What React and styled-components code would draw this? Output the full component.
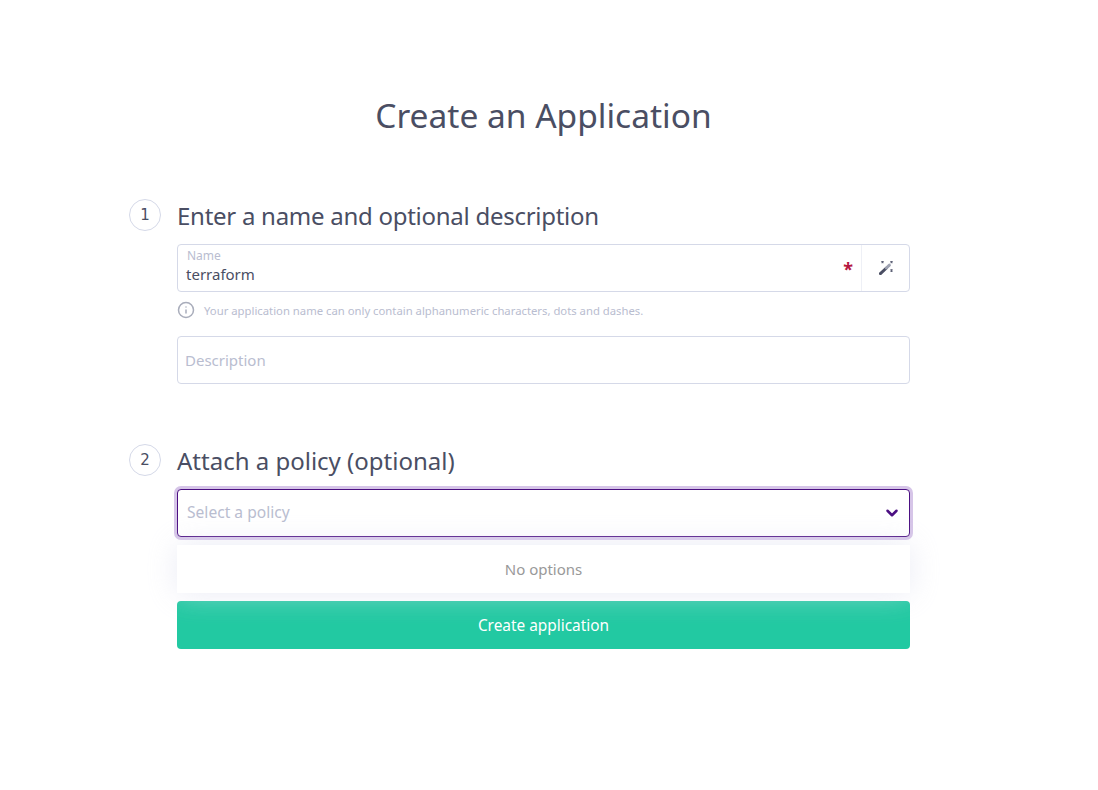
import styled, { createGlobalStyle } from 'styled-components';
import { Info, ChevronDown } from 'lucide-react';

const GlobalStyle = createGlobalStyle`
    html, body {
        margin: 0;
        padding: 0;
        background: #fff;
        font-family: "Noto Sans", "Open Sans", sans-serif;
    }
    * {
        box-sizing: border-box;
    }
`;

const Page = styled.div`
    width: 1098px;
    height: 790px;
    overflow: hidden;
    padding: 92px 0 0 129px;
`;

const Title = styled.h1`
    width: 829px;
    margin: 0 0 61px;
    text-align: center;
    font-size: 33.5px;
    line-height: 46px;
    font-weight: 400;
    color: #4a4e63;
`;

const Step = styled.section`
    display: grid;
    grid-template-columns: 32px 733px;
    column-gap: 16px;
    margin-bottom: ${(props) => props.$gap || 0}px;
`;

const StepNumber = styled.div`
    width: 32px;
    height: 32px;
    border: 1px solid #d5d9e8;
    border-radius: 50%;
    display: flex;
    align-items: center;
    justify-content: center;
    font-family: "DejaVu Sans", sans-serif;
    font-size: 15px;
    color: #4a4e63;
`;

const StepBody = styled.div`
    display: flex;
    flex-direction: column;
    position: relative;
`;

const Heading = styled.h2`
    margin: 0 0 11px;
    font-size: 24px;
    line-height: 34px;
    font-weight: 400;
    letter-spacing: ${(props) => props.$tight ? '-0.27px' : '0'};
    color: #4a4e63;
`;

const Field = styled.div`
    height: 48px;
    border: 1px solid #d5d9e8;
    border-radius: 4px;
    background: #fff;
    display: flex;
    align-items: stretch;
`;

const FieldMain = styled.div`
    flex: 1;
    display: flex;
    flex-direction: column;
    justify-content: center;
    padding: 0 8px ${(props) => props.$stacked ? '5px' : '0'} ${(props) => props.$stacked ? '8px' : '7px'};
    position: relative;
`;

const FloatLabel = styled.label`
    font-size: 12px;
    line-height: 15px;
    padding-left: 1px;
    color: #b9bdd0;
`;

const Value = styled.div`
    margin-top: 1px;
    font-size: 15px;
    line-height: 20px;
    color: #4a4e63;
`;

const Placeholder = styled.div`
    font-size: ${(props) => props.$size || 15}px;
    line-height: 20px;
    margin-top: ${(props) => props.$lift ? '-2px' : '0'};
    color: #b9bdd0;
`;

const Required = styled.span`
    position: absolute;
    right: 8px;
    top: 12px;
    font-size: 18px;
    font-weight: 700;
    line-height: 24px;
    color: #b5173f;
`;

const FieldAction = styled.div`
    width: 48px;
    border-left: 1px solid #eef0f6;
    display: flex;
    align-items: center;
    justify-content: center;
    color: #4a4e63;
`;

const Hint = styled.div`
    display: flex;
    align-items: center;
    gap: 9px;
    height: 18px;
    margin: 9px 0 17px;
    font-size: 11.3px;
    color: #b9bdd0;

    svg {
        color: #a9adbb;
    }
`;

const SelectBox = styled.div`
    height: 48px;
    border: 1px solid #4b0f82;
    border-radius: 4px;
    box-shadow: 0 0 0 3px #d6c5e8;
    background: #fff;
    display: flex;
    align-items: center;
    justify-content: space-between;
    padding: 0 8px 0 9px;
    color: #4b0f82;
`;

const Menu = styled.div`
    position: absolute;
    left: 0;
    right: 0;
    top: 101px;
    height: 48px;
    background: #fff;
    display: flex;
    align-items: center;
    justify-content: center;
    font-size: 15px;
    color: #999;
    box-shadow: 0 0 30px rgba(222, 225, 240, 0.65);
`;

const SubmitButton = styled.button`
    display: block;
    width: 733px;
    height: 48px;
    margin: 64px 0 0 48px;
    border: 0;
    border-radius: 4px;
    background: #22c9a2;
    color: #fff;
    font-family: inherit;
    font-size: 15.4px;
`;

function WandIcon() {
    return (
        <svg width="14" height="14" viewBox="0 0 14 14" fill="none">
            <path d="M1.4 12.6 L7.4 7" stroke="#4a4e63" strokeWidth="3" strokeLinecap="round" />
            <path d="M7.4 7 L10.4 4.2" stroke="#9da1b1" strokeWidth="3" strokeLinecap="round" />
            <path d="M2.5 0 L4.5 2 M4.5 0 L2.5 2 M11.5 0 L13.5 2 M13.5 0 L11.5 2 M11.5 8.5 L13.5 10.5 M13.5 8.5 L11.5 10.5" stroke="#5f6378" strokeWidth="1.2" />
        </svg>
    );
}

export default function App() {
    return (
        <Page>
            <GlobalStyle />
            <Title>Create an Application</Title>

            <Step $gap={60}>
                <StepNumber>1</StepNumber>
                <StepBody>
                    <Heading $tight>Enter a name and optional description</Heading>
                    <Field>
                        <FieldMain $stacked>
                            <FloatLabel>Name</FloatLabel>
                            <Value>terraform</Value>
                            <Required>*</Required>
                        </FieldMain>
                        <FieldAction><WandIcon /></FieldAction>
                    </Field>
                    <Hint>
                        <Info size={18} strokeWidth={2} />
                        Your application name can only contain alphanumeric characters, dots and dashes.
                    </Hint>
                    <Field>
                        <FieldMain>
                            <Placeholder>Description</Placeholder>
                        </FieldMain>
                    </Field>
                </StepBody>
            </Step>

            <Step>
                <StepNumber>2</StepNumber>
                <StepBody>
                    <Heading>Attach a policy (optional)</Heading>
                    <SelectBox>
                        <Placeholder $size={15.6} $lift>Select a policy</Placeholder>
                        <ChevronDown size={18} strokeWidth={3.4} />
                    </SelectBox>
                    <Menu>No options</Menu>
                </StepBody>
            </Step>

            <SubmitButton>Create application</SubmitButton>
        </Page>
    );
}
